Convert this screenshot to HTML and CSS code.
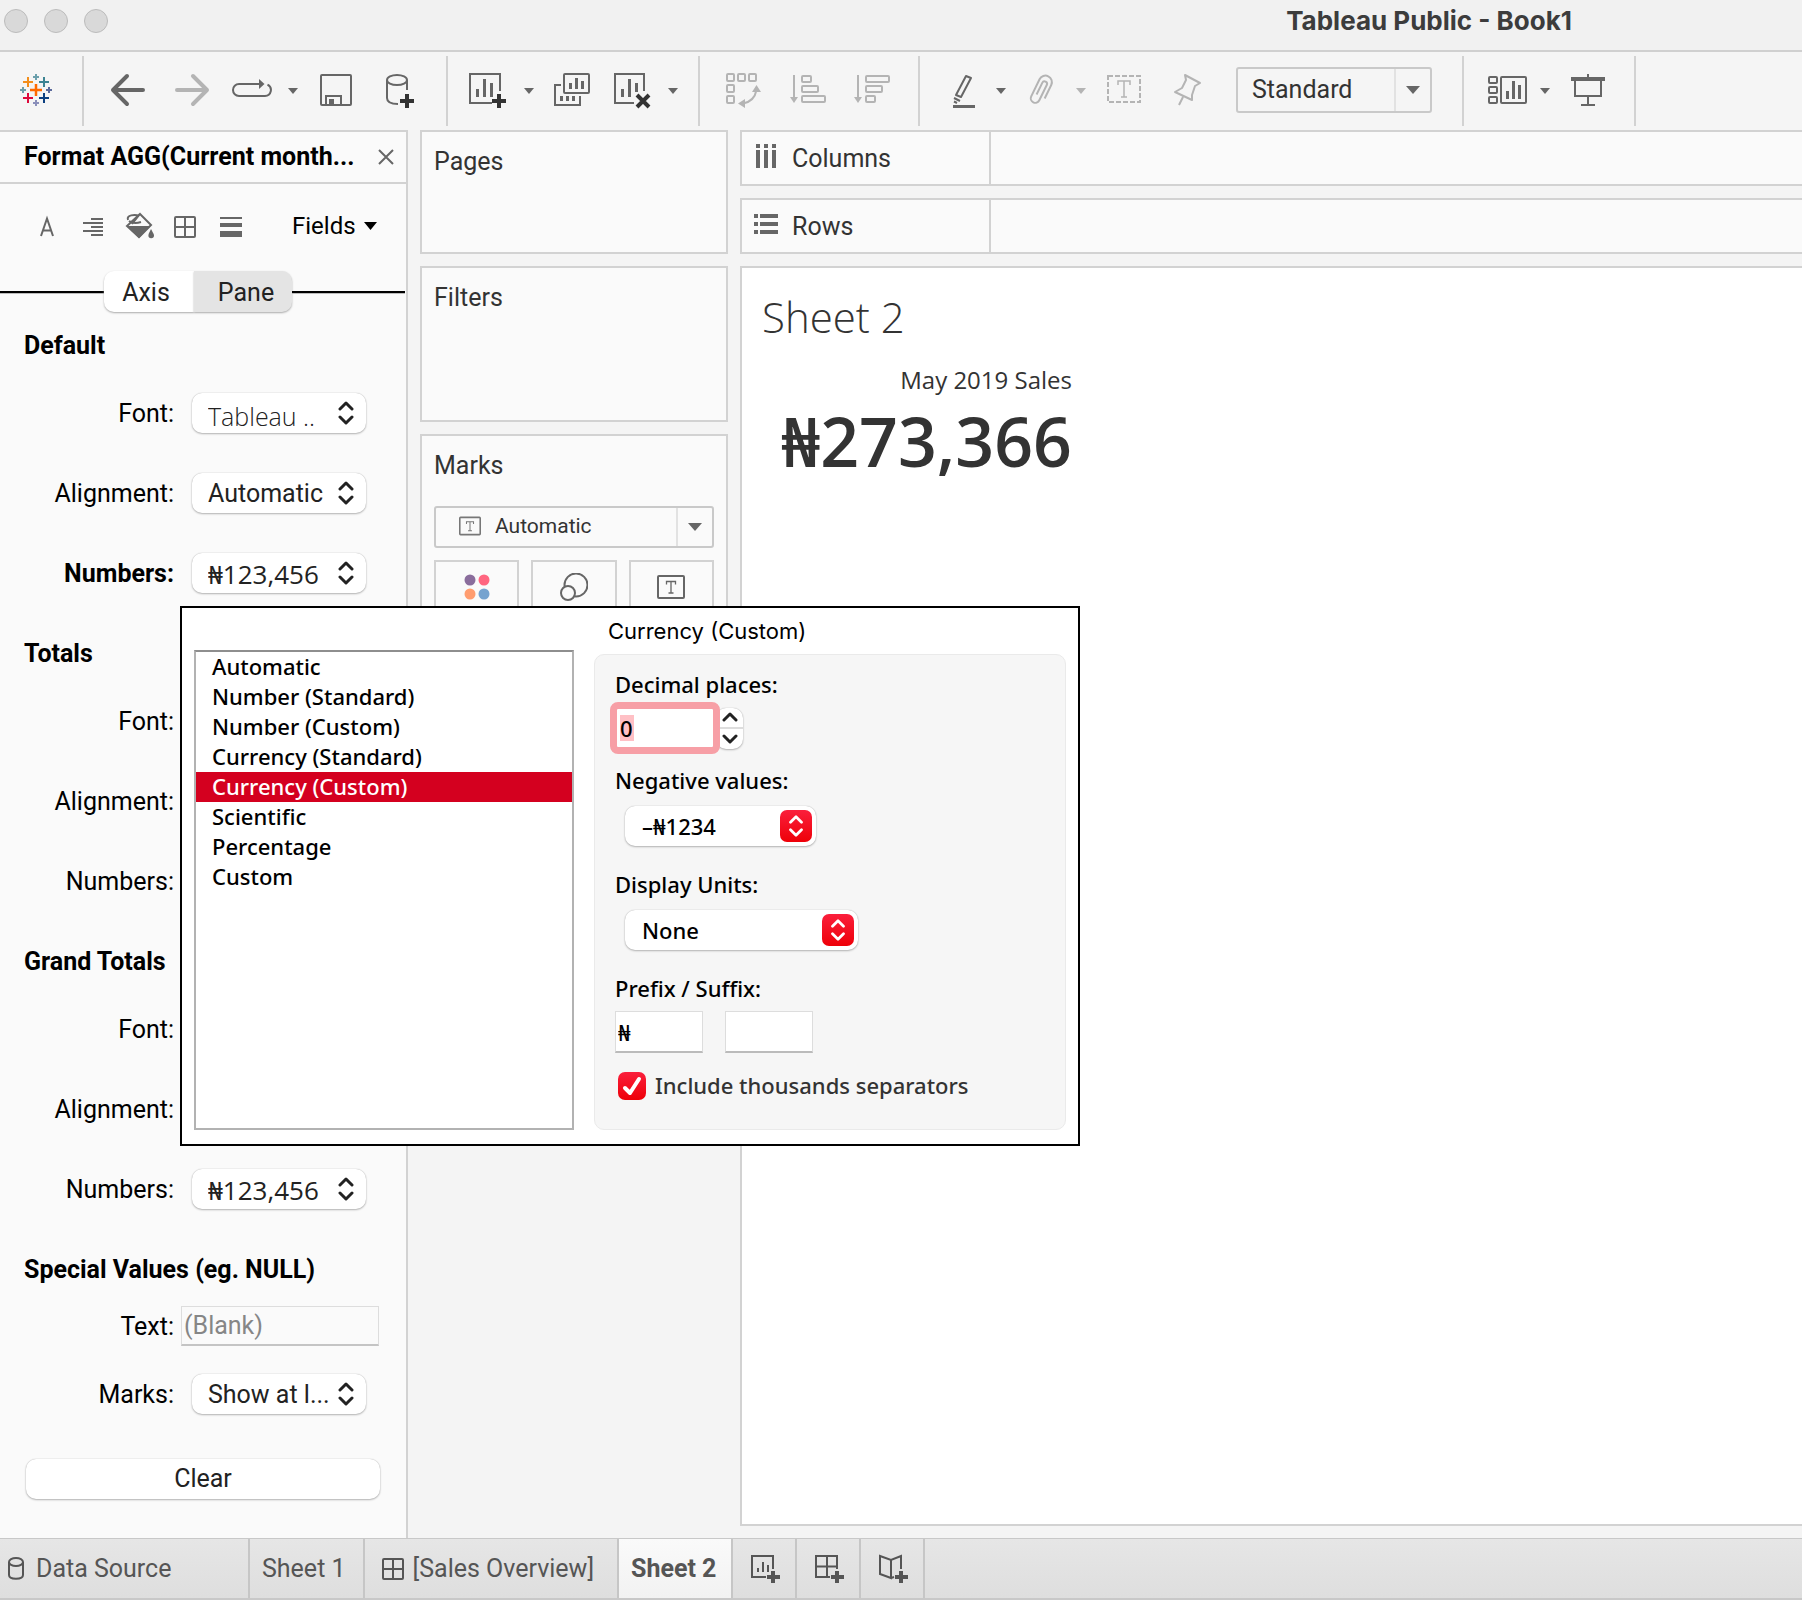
FILE: index.html
```html
<!DOCTYPE html>
<html lang="en">
<head>
<meta charset="utf-8">
<meta name="viewport" content="width=device-width, initial-scale=1">
<title>Tableau Public - Book1</title>
<link rel="stylesheet" href="styles.css">
</head>
<body>
<svg class="sprite" aria-hidden="true">
  <symbol id="updown" viewBox="0 0 16 24"><path d="M2 8l6-6 6 6M2 16l6 6 6-6" fill="none" stroke="currentColor" stroke-width="3" stroke-linecap="round" stroke-linejoin="round"/></symbol>
  <symbol id="caret" viewBox="0 0 20 40"><path d="M5 17h10l-5 6z" fill="currentColor"/></symbol>
  <symbol id="plus" viewBox="0 0 14 14"><path d="M7 0v14M0 7h14" stroke="currentColor" stroke-width="4"/></symbol>
  <symbol id="textbox" viewBox="0 0 28 24"><rect x="1" y="1" width="26" height="22" rx="1" fill="none" stroke="currentColor" stroke-width="2"/><path d="M9.500 9.500V6.500h9v3M14 7v11M11.500 18h5" fill="none" stroke="currentColor" stroke-width="1.300"/></symbol>
</svg>

<header class="titlebar">
  <div class="lights"><span class="light"></span><span class="light"></span><span class="light"></span></div>
  <h1 class="window-title">Tableau Public - Book1</h1>
</header>

<nav class="toolbar" aria-label="Toolbar">
  <div class="group group-logo">
    <button class="tool" aria-label="Start page"><svg viewBox="0 0 40 40" fill="none" stroke-width="2">
      <path d="M20 13v12M14 19h12" stroke="#ff6a00" stroke-width="2.500"/>
      <path d="M12 6v10M7 11h10" stroke="#f28e1c"/><path d="M28 6v10M23 11h10" stroke="#3d8493"/>
      <path d="M12 22v10M7 27h10" stroke="#dd0a3c"/><path d="M28 22v10M23 27h10" stroke="#0b3f80"/>
      <path d="M20 3v6M17 6h6M7 16v6M4 19h6" stroke="#6b9fab"/><path d="M33 16v6M30 19h6" stroke="#5b6a9b"/><path d="M20 29v6M17 32h6" stroke="#8a8fba"/></svg></button>
  </div>
  <div class="group">
    <button class="tool" aria-label="Undo"><svg viewBox="0 0 40 40" fill="none" stroke="currentColor" stroke-width="4" stroke-linecap="round" stroke-linejoin="round"><path d="M5 19H35M19 5L5 19l14 14"/></svg></button>
    <button class="tool off" aria-label="Redo"><svg viewBox="0 0 40 40" fill="none" stroke="currentColor" stroke-width="4" stroke-linecap="round" stroke-linejoin="round"><path d="M5 19H35M21 5l14 14-14 14"/></svg></button>
    <div class="split">
      <button class="tool" aria-label="Replay"><svg viewBox="0 0 40 40" fill="none" stroke="currentColor" stroke-width="2"><path d="M27 13H7a6 6 0 0 0 0 12H33a6 6 0 0 0 2.500-11.400"/><path d="M27 8l5.500 5-5.500 5z" fill="currentColor" stroke="none"/></svg></button>
      <button class="drop" aria-label="Replay options"><svg><use href="#caret"/></svg></button>
    </div>
    <button class="tool" aria-label="Save"><svg viewBox="0 0 40 40" fill="none" stroke="currentColor" stroke-width="2"><rect x="5" y="4" width="30" height="30" rx="1"/><path d="M10 34V25H25V34"/><path d="M13 28h5v5h-5z" fill="currentColor" stroke="none"/></svg></button>
    <button class="tool" aria-label="New data source"><svg viewBox="0 0 40 40" fill="none" stroke="currentColor" stroke-width="2"><ellipse cx="17" cy="9" rx="10" ry="5"/><path d="M7 9V27c0 4 4 6 11 6M27 9V19"/><use class="dark" href="#plus" x="20" y="23" width="14" height="14"/></svg></button>
  </div>
  <div class="group">
    <div class="split">
      <button class="tool" aria-label="New worksheet"><svg viewBox="0 0 40 40" fill="none" stroke="currentColor" stroke-width="2"><path d="M32 20V3H2V32H24"/><path d="M9.500 18v8M16.500 8v18M23.500 12v14" stroke-width="3"/><use class="dark" href="#plus" x="24" y="23" width="14" height="14"/></svg></button>
      <button class="drop" aria-label="New worksheet options"><svg><use href="#caret"/></svg></button>
    </div>
    <button class="tool" aria-label="Duplicate"><svg viewBox="0 0 40 40" fill="none" stroke="currentColor" stroke-width="2"><rect x="12" y="3" width="25" height="19" rx="1"/><path d="M9 14H3V34H28V25"/><path d="M18.500 12v6M24.500 7v11M30.500 10v8M9.500 25v5M15.500 25v5M21.500 25v5" stroke-width="3"/></svg></button>
    <div class="split">
      <button class="tool" aria-label="Clear sheet"><svg viewBox="0 0 40 40" fill="none" stroke="currentColor" stroke-width="2"><path d="M32 20V3H3V32H22"/><path d="M10.500 18v8M17.500 8v18M24.500 12v9" stroke-width="3"/><path class="dark" d="M25 24L37 36M37 24L25 36" stroke-width="4"/></svg></button>
      <button class="drop" aria-label="Clear options"><svg><use href="#caret"/></svg></button>
    </div>
  </div>
  <div class="group">
    <button class="tool off" aria-label="Swap rows and columns"><svg viewBox="0 0 40 40" fill="none" stroke="currentColor" stroke-width="2"><rect x="3" y="3" width="7" height="7" rx="1"/><rect x="14" y="3" width="7" height="7" rx="1"/><rect x="25" y="3" width="7" height="7" rx="1"/><rect x="3" y="14" width="7" height="7" rx="1"/><rect x="3" y="25" width="7" height="7" rx="1"/><path d="M19 32.500C27 31 31 27 32.500 19"/><path d="M14 32.500l7-4.500v9zM32.500 14l-4.500 7h9z" fill="currentColor" stroke="none"/></svg></button>
    <button class="tool off" aria-label="Sort ascending"><svg viewBox="0 0 40 40" fill="none" stroke="currentColor" stroke-width="2"><path d="M6 4V28"/><path d="M2 26h8l-4 6z" fill="currentColor" stroke="none"/><rect x="14" y="5" width="9" height="6" rx="1"/><rect x="14" y="15" width="16" height="6" rx="1"/><rect x="14" y="25" width="23" height="6" rx="1"/></svg></button>
    <button class="tool off" aria-label="Sort descending"><svg viewBox="0 0 40 40" fill="none" stroke="currentColor" stroke-width="2"><path d="M6 4V28"/><path d="M2 26h8l-4 6z" fill="currentColor" stroke="none"/><rect x="14" y="5" width="23" height="6" rx="1"/><rect x="14" y="15" width="16" height="6" rx="1"/><rect x="14" y="25" width="9" height="6" rx="1"/></svg></button>
  </div>
  <div class="group">
    <div class="split">
      <button class="tool" aria-label="Highlight"><svg viewBox="0 0 40 40" fill="none" stroke="currentColor" stroke-width="2"><path d="M26 5l5 2-10 19-5-2z" stroke-linejoin="round"/><path d="M14 27l6 3M14 30.500l3 1.500"/><path d="M13 35.500H35" stroke-width="3"/></svg></button>
      <button class="drop" aria-label="Highlight options"><svg><use href="#caret"/></svg></button>
    </div>
    <div class="split off">
      <button class="tool off" aria-label="Group members"><svg viewBox="0 0 40 40" fill="none" stroke="currentColor" stroke-width="2"><path transform="rotate(26 21 19)" d="M28 25V10a6.500 6.500 0 0 0-13 0V29a4.500 4.500 0 0 0 9 0V12a2.500 2.500 0 0 0-5 0V25"/></svg></button>
      <button class="drop off" aria-label="Group options"><svg><use href="#caret"/></svg></button>
    </div>
    <button class="tool off" aria-label="Show mark labels"><svg viewBox="0 0 40 40" fill="none" stroke="currentColor" stroke-width="2"><rect x="4" y="5" width="32" height="26" stroke-dasharray="5 2"/><path d="M14 14v-4h12v4M20 10v16M17 26h6" stroke-width="1.500"/></svg></button>
    <button class="tool off" aria-label="Fix axes"><svg viewBox="0 0 40 40" fill="none" stroke="currentColor" stroke-width="2" stroke-linejoin="round"><path d="M17 4l1 5-4 8-7 4 17 8V24l3-9 5-3zM15 26l-4 8"/></svg></button>
    <div class="combo combo-fit">
      <select aria-label="Fit"><option>Standard</option></select>
      <svg class="combo-arrow" viewBox="0 0 14 8"><path d="M0 0h14l-7 8z" fill="currentColor"/></svg>
    </div>
  </div>
  <div class="group">
    <div class="split">
      <button class="tool" aria-label="Show cards"><svg viewBox="0 0 40 40" fill="none" stroke="currentColor" stroke-width="2"><rect x="5" y="6" width="8" height="6" rx="1"/><rect x="5" y="16" width="8" height="6" rx="1"/><rect x="5" y="26" width="8" height="6" rx="1"/><rect x="17" y="6" width="25" height="26" rx="1"/><path d="M23.500 20v8M29.500 10v18M35.500 14v14" stroke-width="3"/></svg></button>
      <button class="drop" aria-label="Card options"><svg><use href="#caret"/></svg></button>
    </div>
    <button class="tool" aria-label="Presentation mode"><svg viewBox="0 0 40 40" fill="none" stroke="currentColor" stroke-width="2"><path d="M3 8H37" stroke-width="4"/><path d="M20 3v4M7 9V25H33V9M20 25v9M13 34h14"/></svg></button>
  </div>
</nav>

<main class="workspace">
  <aside class="format">
    <div class="format-head">
      <h2>Format AGG(Current month...</h2>
      <button class="close" aria-label="Close"><svg viewBox="0 0 16 16" fill="none" stroke="currentColor" stroke-width="2"><path d="M1 1L15 15M15 1L1 15"/></svg></button>
    </div>
    <div class="format-tools">
      <button aria-label="Font"><svg viewBox="0 0 36 36" fill="none" stroke="currentColor" stroke-width="2"><path d="M12 27l6-17.500 6 17.500M14 21.500h8"/></svg></button>
      <button aria-label="Alignment"><svg viewBox="0 0 36 36" fill="none" stroke="currentColor" stroke-width="2"><path d="M16 10h12M8 14h20M16 18h12M8 22h20M16 26h12"/></svg></button>
      <button aria-label="Shading"><svg viewBox="0 0 36 36" fill="none" stroke="currentColor" stroke-width="2"><path d="M19 5L30 16 18 28 6 17zM19 5l-8 10"/><path d="M7 11C5 6 14 5 18 7M8 12c4 3 9 2 12 1"/><path d="M6 17h23.500L18 29z" fill="currentColor" stroke="none"/><path d="M30 20c2 4 3 5 3 6.500a2.800 2.800 0 0 1-5.600 0c0-2 1.600-4 2.600-6.500z" fill="currentColor" stroke="none"/></svg></button>
      <button aria-label="Borders"><svg viewBox="0 0 36 36" fill="none" stroke="currentColor" stroke-width="2"><rect x="8" y="8" width="20" height="20" rx="1"/><path d="M18 8v20M8 18h20"/></svg></button>
      <button aria-label="Lines"><svg viewBox="0 0 36 36" fill="currentColor"><path d="M7 8h22v2H7zM7 14h22v4H7zM7 22h22v6H7z"/></svg></button>
      <button class="fields">Fields <svg viewBox="0 0 13 8"><path d="M0 0h13L6.500 8z" fill="currentColor"/></svg></button>
    </div>
    <div class="segments" role="group" aria-label="Scope">
      <button class="segment segment-on">Axis</button><button class="segment">Pane</button>
    </div>

    <section class="fieldset">
      <h3>Default</h3>
      <div class="rows">
        <div class="row"><label for="d-font">Font:</label><span class="pick pick-tableau pick-font"><select id="d-font"><option>Tableau ..</option></select><svg><use href="#updown"/></svg></span></div>
        <div class="row"><label for="d-align">Alignment:</label><span class="pick"><select id="d-align"><option>Automatic</option></select><svg><use href="#updown"/></svg></span></div>
        <div class="row row-strong"><label for="d-num">Numbers:</label><span class="pick pick-tableau"><select id="d-num"><option>₦123,456</option></select><svg><use href="#updown"/></svg></span></div>
      </div>
    </section>
    <section class="fieldset">
      <h3>Totals</h3>
      <div class="rows">
        <div class="row"><label for="t-font">Font:</label><span class="pick pick-tableau"><select id="t-font"></select></span></div>
        <div class="row"><label for="t-align">Alignment:</label><span class="pick"><select id="t-align"></select></span></div>
        <div class="row"><label for="t-num">Numbers:</label><span class="pick pick-tableau"><select id="t-num"></select></span></div>
      </div>
    </section>
    <section class="fieldset">
      <h3>Grand Totals</h3>
      <div class="rows">
        <div class="row"><label for="g-font">Font:</label><span class="pick pick-tableau"><select id="g-font"></select></span></div>
        <div class="row"><label for="g-align">Alignment:</label><span class="pick"><select id="g-align"></select></span></div>
        <div class="row"><label for="g-num">Numbers:</label><span class="pick pick-tableau"><select id="g-num"><option>₦123,456</option></select><svg><use href="#updown"/></svg></span></div>
      </div>
    </section>
    <section class="special">
      <h3>Special Values (eg. NULL)</h3>
      <div class="row"><label for="s-text">Text:</label><input class="blank" id="s-text" type="text" placeholder="(Blank)"></div>
      <div class="row"><label for="s-marks">Marks:</label><span class="pick"><select id="s-marks"><option>Show at l...</option></select><svg><use href="#updown"/></svg></span></div>
      <button class="clear">Clear</button>
    </section>
  </aside>

  <div class="cards">
    <section class="card card-pages"><h2>Pages</h2></section>
    <section class="card card-filters"><h2>Filters</h2></section>
    <section class="card card-marks">
      <h2>Marks</h2>
      <div class="combo combo-mark">
        <svg class="combo-icon"><use href="#textbox"/></svg>
        <select aria-label="Mark type"><option>Automatic</option></select>
        <svg class="combo-arrow" viewBox="0 0 14 8"><path d="M0 0h14l-7 8z" fill="currentColor"/></svg>
      </div>
      <div class="mark-buttons">
        <button aria-label="Color"><svg viewBox="0 0 28 28"><circle cx="7" cy="7" r="5.500" fill="#8a6d9c"/><circle cx="21" cy="7" r="5.500" fill="#ff6680"/><circle cx="7" cy="21" r="5.500" fill="#ff9d70"/><circle cx="21" cy="21" r="5.500" fill="#76a3cf"/></svg></button>
        <button aria-label="Size"><svg viewBox="0 0 28 28" fill="none" stroke="currentColor" stroke-width="2"><circle cx="16" cy="12" r="11.500"/><circle cx="8" cy="20" r="7" fill="#fafafa"/></svg></button>
        <button aria-label="Text"><svg><use href="#textbox"/></svg></button>
      </div>
    </section>
  </div>

  <div class="canvas">
    <div class="shelf">
      <div class="shelf-name"><svg viewBox="0 0 24 24" fill="currentColor"><path d="M2 0h4v4H2zM10 0h4v4h-4zM18 0h4v4h-4zM2 6h4v18H2zM10 6h4v18h-4zM18 6h4v18h-4z"/></svg><span>Columns</span></div>
    </div>
    <div class="shelf">
      <div class="shelf-name"><svg viewBox="0 0 24 24" fill="currentColor"><path d="M0 2h4v4H0zM0 10h4v4H0zM0 18h4v4H0zM6 2h18v4H6zM6 10h18v4H6zM6 18h18v4H6z"/></svg><span>Rows</span></div>
    </div>
    <section class="sheet">
      <h2>Sheet 2</h2>
      <div class="kpi">
        <div class="kpi-label">May 2019 Sales</div>
        <div class="kpi-value">₦273,366</div>
      </div>
    </section>
  </div>
</main>

<div class="dialog" role="dialog" aria-label="Number format">
  <ul class="list" role="listbox" aria-label="Format">
    <li role="option">Automatic</li>
    <li role="option">Number (Standard)</li>
    <li role="option">Number (Custom)</li>
    <li role="option">Currency (Standard)</li>
    <li role="option" class="chosen" aria-selected="true">Currency (Custom)</li>
    <li role="option">Scientific</li>
    <li role="option">Percentage</li>
    <li role="option">Custom</li>
  </ul>
  <div class="options">
    <h2>Currency (Custom)</h2>
    <div class="panel">
      <div class="option">
        <label for="decimals">Decimal places:</label>
        <div class="spin">
          <input id="decimals" type="text" inputmode="numeric" value="0">
          <div class="stepper">
            <button aria-label="Increase"><svg viewBox="0 0 16 10" fill="none" stroke="currentColor" stroke-width="3" stroke-linecap="round" stroke-linejoin="round"><path d="M2 8l6-6 6 6"/></svg></button>
            <button aria-label="Decrease"><svg viewBox="0 0 16 10" fill="none" stroke="currentColor" stroke-width="3" stroke-linecap="round" stroke-linejoin="round"><path d="M2 2l6 6 6-6"/></svg></button>
          </div>
        </div>
      </div>
      <div class="option">
        <label for="negative">Negative values:</label>
        <span class="menu menu-short"><select id="negative"><option>–₦1234</option></select><span class="menu-cap"><svg><use href="#updown"/></svg></span></span>
      </div>
      <div class="option">
        <label for="units">Display Units:</label>
        <span class="menu"><select id="units"><option>None</option></select><span class="menu-cap"><svg><use href="#updown"/></svg></span></span>
      </div>
      <div class="option">
        <label for="prefix">Prefix / Suffix:</label>
        <div class="affixes"><input id="prefix" type="text" value="₦"><input type="text" aria-label="Suffix"></div>
      </div>
      <label class="check"><input type="checkbox" checked><svg viewBox="0 0 28 28" fill="none" stroke="#fff" stroke-width="4" stroke-linecap="round" stroke-linejoin="round"><path d="M7 16l5 5L21 7"/></svg><span>Include thousands separators</span></label>
    </div>
  </div>
</div>

<footer class="tabs">
  <a class="tab tab-source" href="#source"><svg viewBox="0 0 24 24" fill="none" stroke="currentColor" stroke-width="2"><ellipse cx="12" cy="5" rx="7" ry="4"/><path d="M5 5V18c0 5 14 5 14 0V5"/></svg>Data Source</a>
  <a class="tab" href="#sheet1">Sheet 1</a>
  <a class="tab tab-board" href="#overview"><svg viewBox="0 0 24 24" fill="none" stroke="currentColor" stroke-width="2"><rect x="2" y="2" width="20" height="20" rx="1"/><path d="M12 2v20M2 12h20"/></svg>[Sales Overview]</a>
  <a class="tab tab-on" href="#sheet2" aria-current="page">Sheet 2</a>
  <button class="tab tab-new" aria-label="New worksheet"><svg viewBox="0 0 30 30" fill="none" stroke="currentColor" stroke-width="2"><path d="M22 15V2H1V23H15"/><path d="M7 14v4M12 8v10M17 11v7"/><path d="M22 17v12M16 23h13" stroke-width="4"/></svg></button>
  <button class="tab tab-new" aria-label="New dashboard"><svg viewBox="0 0 30 30" fill="none" stroke="currentColor" stroke-width="2"><path d="M22 15V2H1V23H15M12 2V23M1 12.500H22"/><path d="M22 17v12M16 23h13" stroke-width="4"/></svg></button>
  <button class="tab tab-new" aria-label="New story"><svg viewBox="0 0 30 30" fill="none" stroke="currentColor" stroke-width="2"><path d="M22 15V2L12 6 1 2V20l11 4V6M12 24l3-1"/><path d="M22 17v12M16 23h13" stroke-width="4"/></svg></button>
</footer>
</body>
</html>
```
FILE: styles.css
```css
:root {
  --ui: Roboto, "Liberation Sans", sans-serif;
  --sheet: "Open Sans", "Noto Sans", sans-serif;
  --dialog: "Noto Sans", "Open Sans", sans-serif;
  --line: #d2d2d2;
  --panel: #fafafa;
  --icon: #666;
  --lift: 0 0 1px #aaa, 0 1px 2px #b4b4b4;
}

* { box-sizing: border-box; }

body {
  margin: 0;
  min-height: 100vh;
  display: flex;
  flex-direction: column;
  position: relative;
  background: #f4f4f4;
  color: #333;
  font: 25px/32px var(--ui);
  overflow-x: hidden;
}

h1, h2, h3, ul { margin: 0; padding: 0; }
button, select, input { font: inherit; color: inherit; margin: 0; }
button { border: 0; padding: 0; background: none; }
select { appearance: none; border: 0; background: none; outline: 0; min-width: 0; }
svg { display: block; }
.sprite { display: none; }
.dark { color: #333; stroke: #333; }

/* Title bar */
.titlebar {
  display: flex;
  align-items: center;
  justify-content: space-between;
  height: 52px;
  padding: 0 230px 8px 4px;
  background: #f1f1f1;
  border-bottom: 2px solid #d0d0d0;
}
.lights { display: flex; gap: 16px; }
.light { width: 24px; height: 24px; border-radius: 50%; background: #d9d9d9; border: 1px solid #bcbcbc; }
.window-title { font: 700 26px/32px Inter, sans-serif; color: #3c3c3c; }

/* Toolbar */
.toolbar { display: flex; height: 78px; padding: 4px 0; background: #f5f5f5; color: var(--icon); }
.group {
  display: flex;
  align-items: center;
  gap: 24px;
  padding: 0 26px 0 24px;
  border-right: 2px solid var(--line);
}
.group-logo { padding-left: 16px; }
.tool { width: 40px; height: 40px; flex: none; }
.tool svg { width: 40px; height: 40px; overflow: visible; }
.split { display: flex; gap: 11px; margin: 0 -11px 0 -4px; }
.drop { width: 20px; height: 40px; }
.drop svg { width: 20px; height: 40px; }
.off { color: #b4b4b4; }

.combo {
  display: grid;
  align-items: center;
  border: 2px solid #c9c9c9;
  border-radius: 3px;
  color: #333;
}
.combo select { height: 100%; padding: 0; }
.combo-arrow {
  box-sizing: content-box;
  width: 14px;
  height: 8px;
  padding: 15px 10px;
  border-left: 2px solid #e2e2e2;
  color: var(--icon);
}
.combo-fit { width: 196px; height: 46px; margin: 0 4px 2px; padding-left: 14px; grid-template-columns: 1fr auto; }
.combo-fit .combo-arrow { padding: 17px 10px; }

/* Workspace */
.workspace { flex: 1; display: flex; gap: 12px; }

.format {
  flex: none;
  width: 408px;
  background: var(--panel);
  border: solid var(--line);
  border-width: 2px 2px 0 0;
  color: #000;
}
.format-head {
  display: flex;
  align-items: center;
  justify-content: space-between;
  height: 52px;
  padding: 0 12px 0 24px;
  border-bottom: 2px solid var(--line);
}
.format h2, .format h3 { font-size: 25px; line-height: 40px; font-weight: 700; white-space: nowrap; }
.format h3 { padding: 0 0 0 24px; }
.close { color: var(--icon); }
.close svg { width: 16px; height: 16px; }
.format-tools { display: flex; align-items: center; gap: 10px; padding: 25px 0 26px 29px; color: var(--icon); }
.format-tools svg { width: 36px; height: 36px; }
.format-tools .fields { display: flex; align-items: center; gap: 8px; margin: 0 0 2px 33px; font-size: 24px; color: #000; }
.format-tools .fields svg { width: 13px; height: 8px; }

.segments { display: flex; align-items: center; height: 41px; margin-bottom: 14px; }
.segments::before, .segments::after { content: ""; height: 2px; background: #000; box-shadow: 0 1px #bbb; }
.segments::before { width: 104px; }
.segments::after { flex: 1; margin-right: 1px; }
.segment {
  width: 98px;
  height: 41px;
  padding: 2px 0 0 6px;
  color: #222;
  background: #e4e4e4;
  border-radius: 0 10px 10px 0;
  box-shadow: 0 1px 2px #aaa;
}
.segment-on { width: 90px; padding: 2px 6px 0 0; background: #fff; border-radius: 10px 0 0 10px; }

.fieldset { margin-bottom: 41px; }
.rows { display: grid; gap: 40px; margin-top: 27px; }
.row { display: flex; align-items: center; height: 40px; }
.row label { width: 174px; padding-top: 2px; text-align: right; }
.row-strong label { font-weight: 700; }
.pick {
  display: grid;
  grid-template-columns: 1fr auto;
  align-items: center;
  width: 174px;
  height: 40px;
  margin-left: 18px;
  padding: 0 12px 0 16px;
  background: #fff;
  border-radius: 10px;
  box-shadow: var(--lift);
  color: #222;
}
.pick select { grid-area: 1 / 1 / 2 / 3; width: 100%; height: 40px; padding: 2px 0 0; }
.pick svg { grid-area: 1 / 2; width: 16px; height: 24px; pointer-events: none; }
.pick-tableau { font: 400 26px/32px var(--sheet); }
.pick-font { font-size: 25px; font-weight: 300; }
.pick-font select { padding-top: 6px; }
.special { padding-bottom: 30px; }
.special h3 { margin-bottom: 16px; }
.special .row + .row { margin-top: 28px; }
.blank {
  width: 198px;
  height: 40px;
  margin-left: 7px;
  padding: 0 2px;
  border: 1px solid #ddd;
  border-bottom: 2px solid #c4c4c4;
  background: var(--panel);
}
.blank::placeholder { color: #868686; opacity: 1; }
.clear {
  display: block;
  width: 354px;
  height: 40px;
  margin: 45px 0 0 26px;
  background: #fff;
  border-radius: 10px;
  box-shadow: var(--lift);
  color: #222;
}

/* Cards */
.cards { flex: none; width: 308px; display: flex; flex-direction: column; gap: 12px; }
.card { padding: 13px 12px 12px; border: 2px solid var(--line); background: var(--panel); }
.card h2 { font-size: 25px; line-height: 34px; font-weight: 400; }
.card-pages { height: 124px; }
.card-filters { height: 156px; }
.combo-mark {
  grid-template-columns: auto 1fr auto;
  height: 42px;
  margin-top: 23px;
  padding-left: 23px;
  column-gap: 14px;
  font-size: 21px;
}
.combo-mark select { padding-bottom: 2px; }
.combo-icon { width: 22px; height: 20px; margin-bottom: 2px; color: #777; }
.mark-buttons { display: grid; grid-template-columns: 1fr 1fr 1fr; gap: 12px; margin-top: 12px; color: var(--icon); }
.mark-buttons button { height: 84px; padding: 11px 0; display: flex; justify-content: center; border: 2px solid var(--line); }
.mark-buttons svg { width: 28px; height: 28px; }

/* Canvas */
.canvas { flex: 1; min-width: 0; display: flex; flex-direction: column; gap: 12px; padding-bottom: 12px; }
.shelf { height: 56px; border: solid var(--line); border-width: 2px 0 2px 2px; background: var(--panel); }
.shelf-name { display: flex; align-items: center; gap: 14px; width: 249px; height: 52px; padding-left: 12px; border-right: 2px solid var(--line); }
.shelf-name svg { width: 24px; height: 24px; margin-bottom: 4px; color: var(--icon); }
.shelf-name span { padding-top: 2px; }
.sheet { flex: 1; padding: 20px; background: #fff; border: solid var(--line); border-width: 2px 0 2px 2px; font-family: var(--sheet); }
.sheet h2 { font-size: 42px; line-height: 58px; font-weight: 300; }
.kpi { width: 310px; text-align: right; white-space: nowrap; }
.kpi-label { font-size: 24px; line-height: 68px; }
.kpi-value { font-size: 68px; line-height: 54px; font-weight: 600; }

/* Number format dialog */
.dialog {
  position: absolute;
  left: 180px;
  top: 606px;
  width: 900px;
  height: 540px;
  display: flex;
  gap: 20px;
  padding: 0 12px 14px;
  background: #fff;
  border: 2px solid #000;
  color: #000;
  font: 500 22px/30px var(--dialog);
}
.list { width: 380px; margin-top: 42px; border: 2px solid #b2b2b2; border-top-color: #8e8e8e; list-style: none; }
.list li { padding: 0 0 2px 16px; line-height: 28px; }
.list .chosen { background: #d4001f; color: #fff; }
.options { flex: 1; display: flex; flex-direction: column; }
.options h2 { padding: 8px 14px; font: 400 22px/30px Inter, sans-serif; }
.panel { flex: 1; display: flex; flex-direction: column; padding: 15px 20px; background: #f6f6f6; border: 1px solid #eaeaea; border-radius: 10px; }
.option { display: flex; flex-direction: column; }
.option label { padding-bottom: 2px; line-height: 28px; }
.spin { display: flex; align-items: center; height: 44px; margin: 6px 0 16px; }
.spin input {
  position: relative;
  width: 96px;
  height: 38px;
  margin-left: 2px;
  padding: 0 3px;
  border: 0;
  outline: 7px solid #f79fa6;
  border-radius: 1px;
  background: #fff linear-gradient(#ffc0c5, #ffc0c5) 3px 6px / 14px 26px no-repeat;
}
.stepper { display: grid; width: 27px; height: 41px; margin-left: 3px; background: #fff; border-radius: 10px; box-shadow: var(--lift); overflow: hidden; color: #222; }
.stepper button { display: grid; place-items: center; }
.stepper button + button { border-top: 2px solid #ddd; }
.stepper svg { width: 16px; height: 10px; }

.menu {
  display: grid;
  grid-template-columns: 1fr auto;
  align-items: center;
  width: 233px;
  height: 40px;
  margin: 10px 0 24px 10px;
  padding: 0 4px 0 17px;
  background: #fff;
  border-radius: 10px;
  box-shadow: var(--lift);
}
.menu-short { width: 191px; }
.menu select { grid-area: 1 / 1 / 2 / 3; width: 100%; height: 40px; padding: 0; }
.menu-cap { grid-area: 1 / 2; display: grid; place-items: center; width: 32px; height: 32px; border-radius: 7px; background: linear-gradient(#fa1f3c, #ee0008); color: #fff; pointer-events: none; }
.menu-cap svg { width: 16px; height: 22px; }
.affixes { display: flex; gap: 22px; margin: 7px 0 18px; }
.affixes input { width: 88px; height: 42px; padding: 0 2px; border: 1px solid #ddd; border-bottom: 2px solid #bbb; background: #fff; }
.check { display: grid; grid-template-columns: 28px 1fr; align-items: center; column-gap: 9px; padding-left: 3px; color: #333; }
.check input { grid-area: 1 / 1; appearance: none; width: 28px; height: 28px; border-radius: 7px; background: linear-gradient(#fa1f3c, #ee0008); }
.check svg { grid-area: 1 / 1; width: 28px; height: 28px; pointer-events: none; }
.check span { padding-bottom: 2px; line-height: 28px; }

/* Sheet tabs */
.tabs {
  display: flex;
  height: 62px;
  border: solid #c8c8c8;
  border-width: 1px 0 2px;
  background: linear-gradient(#e6e6e6, #dedede);
  color: #555;
}
.tab { display: flex; align-items: center; padding: 0 17px 0 12px; border-right: 2px solid #c6c6c6; color: #555; text-decoration: none; white-space: nowrap; }
.tab svg { width: 24px; height: 24px; margin-right: 8px; }
.tab-source { width: 250px; padding-left: 4px; }
.tab-board { padding: 0 23px 0 16px; }
.tab-on { padding: 0 15px 0 12px; background: linear-gradient(#fafafa, #f2f2f2); font-weight: 700; }
.tab-new { width: 64px; padding: 0 14px 0 18px; }
.tab-new svg { width: 30px; height: 30px; margin: 0; flex: none; }
```
